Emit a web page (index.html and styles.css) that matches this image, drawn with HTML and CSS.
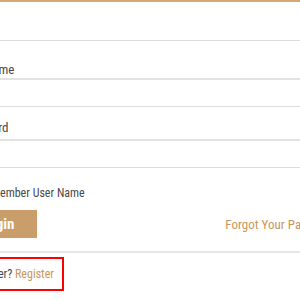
FILE: index.html
```html
<!DOCTYPE html>
<html lang="en">
<head>
    <meta charset="UTF-8">
    <meta name="viewport" content="width=device-width, initial-scale=1.0">
    <title>Login</title>
    <link rel="stylesheet" href="styles.css">
</head>
<body>
    <div class="login-panel">
        <form class="login-form">
            <div class="field">
                <input type="text" placeholder="User Name">
            </div>
            <div class="field field-password">
                <input type="password" placeholder="Password">
            </div>
            <div class="options">
                <label class="remember">
                    <input type="checkbox">
                    <span>Remember User Name</span>
                </label>
                <div class="actions">
                    <button type="button" class="login-btn">Login</button>
                    <a href="#" class="forgot">Forgot Your Password?</a>
                </div>
            </div>
            <div class="register">
                Not a member? <a href="#">Register</a>
            </div>
        </form>
    </div>
</body>
</html>
```

FILE: styles.css
```css
body {
    margin: 0;
    overflow: hidden;
    background: #fff;
    font-family: "Roboto Condensed", Roboto, "Liberation Sans", Arial, sans-serif;
    color: #555;
}

.login-panel {
    border-top: 2px solid #d4a874;
    padding-top: 38px;
    margin-left: -42px;
    width: 420px;
}

.login-form {
    display: flex;
    flex-direction: column;
    gap: 26px;
}

.field input {
    display: block;
    width: 100%;
    box-sizing: border-box;
    height: 40px;
    padding: 21px 0 1px 0;
    border: none;
    border-top: 1px solid #dcdcdc;
    border-bottom: 2px solid #e2e2e2;
    font-family: inherit;
    font-size: 13px;
    line-height: 15px;
    outline: none;
}

.field-password input {
    height: 35px;
    padding: 13px 0 4px 0;
}

.field input::placeholder {
    color: #4a4a4a;
}

.options {
    box-sizing: border-box;
    height: 86px;
    padding-top: 18px;
    border-top: 1px solid #dcdcdc;
    border-bottom: 2px solid #e6e6e6;
}

.remember {
    display: flex;
    align-items: center;
    font-size: 12px;
    line-height: 14px;
    color: #4a4a4a;
}

.remember input {
    width: 13px;
    height: 13px;
    margin: 0 8px 0 0;
}

.actions {
    display: flex;
    align-items: center;
    margin-top: 10px;
    margin-left: -1px;
}

.login-btn {
    background: #c99e6a;
    color: #fff;
    border: none;
    height: 28px;
    padding: 0 23px 0 24px;
    font-family: inherit;
    font-size: 15px;
    font-weight: 700;
}

.forgot {
    margin-left: 188px;
    color: #c8955c;
    font-size: 13px;
    text-decoration: none;
}

.register {
    align-self: flex-start;
    margin-top: -22px;
    margin-left: -28px;
    padding: 8px;
    border: 2px solid #f00;
    font-size: 12px;
    line-height: 14px;
    color: #4a4a4a;
}

.register a {
    color: #c8955c;
    text-decoration: none;
}
```
